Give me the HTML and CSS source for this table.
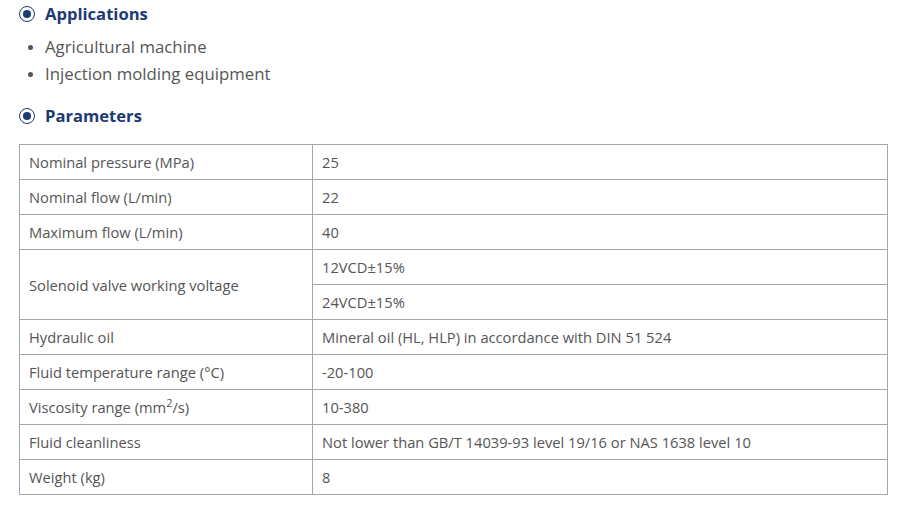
FILE: index.html
```html
<!DOCTYPE html>
<html>
<head>
<meta charset="utf-8">
<link rel="stylesheet" href="styles.css">
</head>
<body>
<div class="page">
  <h3 class="section-title"><span class="ring"><span class="dot"></span></span>Applications</h3>
  <ul class="apps">
    <li>Agricultural machine</li>
    <li>Injection molding equipment</li>
  </ul>
  <h3 class="section-title params"><span class="ring"><span class="dot"></span></span>Parameters</h3>
  <table class="specs">
    <colgroup><col class="c1"><col class="c2"></colgroup>
    <tr><td>Nominal pressure (MPa)</td><td>25</td></tr>
    <tr><td>Nominal flow (L/min)</td><td>22</td></tr>
    <tr><td>Maximum flow (L/min)</td><td>40</td></tr>
    <tr><td rowspan="2">Solenoid valve working voltage</td><td>12VCD±15%</td></tr>
    <tr><td>24VCD±15%</td></tr>
    <tr><td>Hydraulic oil</td><td>Mineral oil (HL, HLP) in accordance with DIN 51 524</td></tr>
    <tr><td>Fluid temperature range (°C)</td><td>-20-100</td></tr>
    <tr><td>Viscosity range (mm<sup>2</sup>/s)</td><td>10-380</td></tr>
    <tr><td>Fluid cleanliness</td><td>Not lower than GB/T 14039-93 level 19/16 or NAS 1638 level 10</td></tr>
    <tr><td>Weight (kg)</td><td>8</td></tr>
  </table>
</div>
</body>
</html>
```

FILE: styles.css
```css
html, body {
  margin: 0;
  padding: 0;
  background: #ffffff;
}
.page {
  padding-left: 19px;
  font-family: "Open Sans", "DejaVu Sans", sans-serif;
  color: #555555;
}
.section-title {
  margin: 0;
  height: 28px;
  line-height: 28px;
  display: flex;
  align-items: center;
  font-size: 16.6px;
  font-weight: 700;
  color: #1d3a74;
}
.section-title.params {
  margin-top: 15px;
}
.ring {
  box-sizing: border-box;
  width: 16px;
  height: 16px;
  border: 1.6px solid #1d3a74;
  border-radius: 50%;
  display: flex;
  align-items: center;
  justify-content: center;
  margin-right: 10px;
}
.dot {
  width: 8px;
  height: 8px;
  border-radius: 50%;
  background: #1d3a74;
}
.apps {
  margin: 5px 0 0 0;
  padding: 0 0 0 26px;
  font-size: 16.8px;
  line-height: 27px;
  color: #555555;
}
.apps li::marker {
  font-size: 14px;
}
.specs {
  margin-top: 14px;
  border-collapse: collapse;
  width: 869px;
  table-layout: fixed;
  font-size: 14.7px;
  color: #555555;
}
.c1 { width: 293px; }
.specs td {
  border: 1px solid #a6a6a6;
  height: 35px;
  box-sizing: border-box;
  padding: 0 9px;
  line-height: 20px;
  vertical-align: middle;
}
.specs sup {
  font-size: 11px;
  line-height: 0;
}
```
